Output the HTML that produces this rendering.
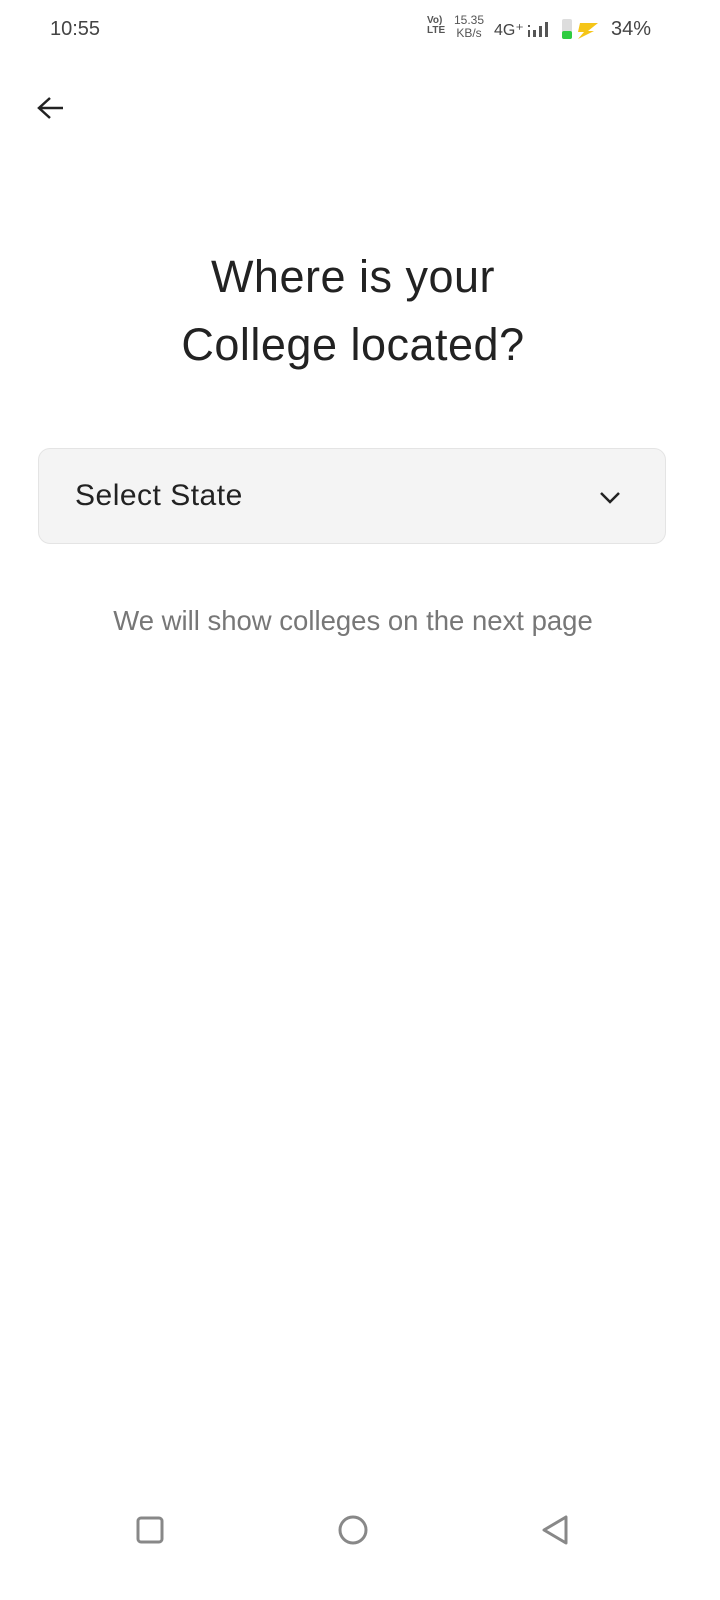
<!DOCTYPE html>
<html><head><style>
body{margin:0;width:720px;height:1600px;background:#fff;font-family:"Liberation Sans",sans-serif;position:relative;overflow:hidden}
.a{position:absolute}
</style></head><body>
<div class="a" style="left:50px;top:18px;font-size:20px;color:#444">10:55</div>
<div class="a" style="left:427px;top:16px;font-size:10px;line-height:10px;color:#555;font-weight:bold">Vo)<br>LTE</div>
<div class="a" style="left:454px;top:14px;font-size:12px;line-height:13px;color:#555;text-align:center">15.35<br>KB/s</div>
<div class="a" style="left:494px;top:20px;font-size:16px;color:#444">4G⁺</div>
<svg class="a" style="left:528px;top:21px" width="22" height="18"><rect x="0" y="4" width="2" height="2" fill="#555"/><rect x="0" y="9" width="2" height="7" fill="#555"/><rect x="5" y="9" width="3" height="7" fill="#555"/><rect x="11" y="5" width="3" height="11" fill="#555"/><rect x="17" y="1" width="3" height="15" fill="#555"/></svg>
<svg class="a" style="left:560px;top:17px" width="40" height="24"><rect x="2" y="2" width="10" height="20" rx="2" fill="#ddd"/><rect x="2" y="14" width="10" height="8" rx="2" fill="#2ecc40"/><path d="M20 6h18l-10 8h6l-16 8 6-7h-6z" fill="#f5c518"/></svg>
<div class="a" style="left:611px;top:18px;font-size:20px;color:#444">34%</div>
<svg class="a" style="left:36px;top:94px" width="30" height="30"><path d="M27 14H4M14 4L3 14l11 10" stroke="#222" stroke-width="2.5" fill="none"/></svg>
<div class="a" style="left:0;width:706px;top:243px;text-align:center;font-size:45px;line-height:68px;color:#222;letter-spacing:0.5px">Where is your<br>College located?</div>
<div class="a" style="left:38px;top:448px;width:628px;height:96px;background:#f4f4f4;border:1px solid #e4e4e4;border-radius:12px;box-sizing:border-box"></div>
<div class="a" style="left:75px;top:479px;font-size:30px;color:#222;letter-spacing:0.5px">Select State</div>
<svg class="a" style="left:598px;top:488px" width="24" height="18"><path d="M3 5l9 9 9-9" stroke="#222" stroke-width="2.5" fill="none"/></svg>
<div class="a" style="left:0;width:706px;top:605px;text-align:center;font-size:27.5px;color:#777">We will show colleges on the next page</div>
<svg class="a" style="left:136px;top:1516px" width="28" height="28"><rect x="2" y="2" width="24" height="24" rx="3" stroke="#888" stroke-width="3" fill="none"/></svg>
<svg class="a" style="left:337px;top:1514px" width="32" height="32"><circle cx="16" cy="16" r="13" stroke="#888" stroke-width="3" fill="none"/></svg>
<svg class="a" style="left:540px;top:1514px" width="30" height="32"><path d="M26 3v26L4 16z" stroke="#888" stroke-width="3" stroke-linejoin="round" fill="none"/></svg>
</body></html>
